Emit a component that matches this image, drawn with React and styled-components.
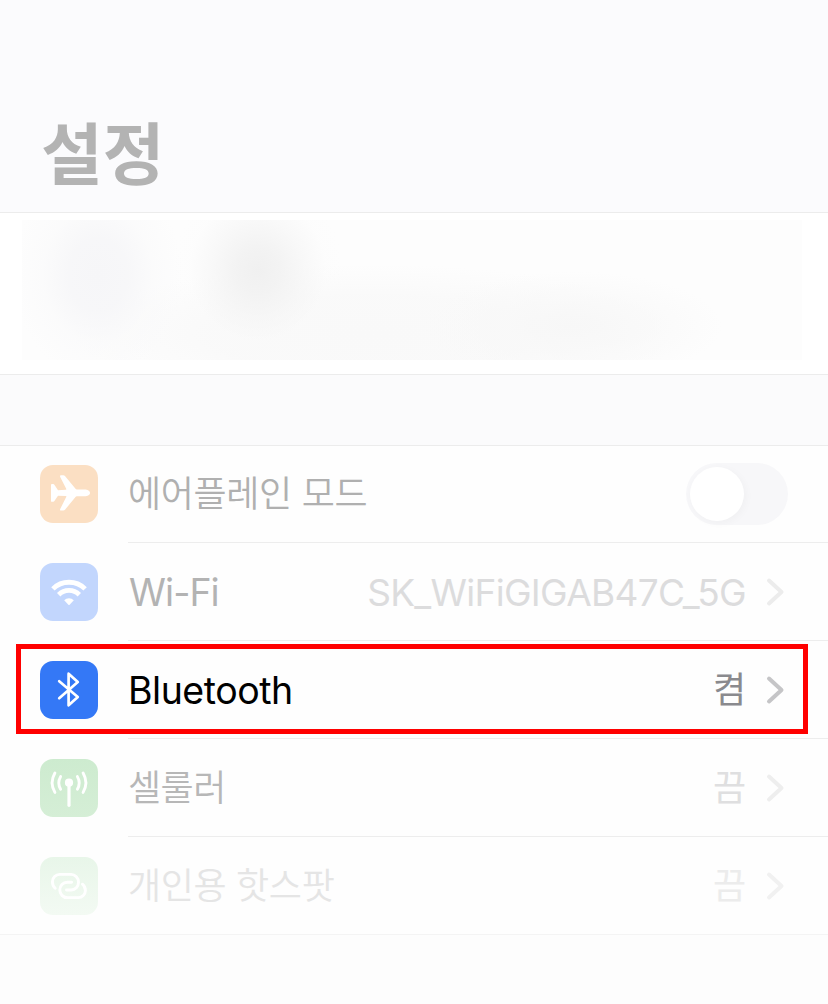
import React from "react";
import styled, { createGlobalStyle } from "styled-components";

const GlobalStyle = createGlobalStyle`
  * { box-sizing: border-box; }
  body { margin: 0; background: #fdfdfd; }
`;

const Screen = styled.main`
  width: 828px;
  height: 1004px;
  overflow: hidden;
  display: flex;
  flex-direction: column;
  background: #fdfdfd;
  font-family: Inter, "Noto Sans CJK KR", sans-serif;
`;

const Header = styled.header`
  height: 213px;
  padding: 111px 0 0 41px;
  background: #fbfbfd;
  border-bottom: 1px solid #ececec;
`;

const Title = styled.h1`
  margin: 0;
  font-size: 67px;
  line-height: 88px;
  font-weight: 700;
  color: #b3b3b3;
`;

const Profile = styled.section`
  height: 162px;
  padding: 7px 26px 14px 22px;
  background: #ffffff;
  border-bottom: 1px solid #ececec;
`;

const ProfileHaze = styled.div`
  height: 140px;
  background:
    radial-gradient(ellipse 85px 90px at 236px 50px, #f0f0f0 0%, rgba(241, 241, 241, 0.85) 25%, rgba(244, 244, 244, 0.5) 55%, rgba(250, 250, 250, 0.15) 80%, rgba(252, 252, 252, 0) 100%),
    radial-gradient(ellipse 85px 105px at 76px 55px, #f6f6f8 0%, rgba(246, 246, 248, 0.85) 35%, rgba(249, 249, 250, 0.5) 65%, rgba(252, 252, 252, 0) 100%),
    radial-gradient(ellipse 150px 55px at 550px 106px, #f7f7f7 0%, rgba(248, 248, 248, 0.7) 45%, rgba(252, 252, 252, 0) 100%),
    radial-gradient(ellipse 300px 70px at 350px 114px, #f9f9f9 0%, rgba(249, 249, 249, 0.85) 55%, rgba(253, 253, 253, 0) 100%),
    #fdfdfd;
`;

const Gap = styled.div`
  height: 71px;
  background: #fbfbfc;
  border-bottom: 1px solid #ececec;
`;

const List = styled.ul`
  margin: 0;
  padding: 0;
  list-style: none;
  background: #fefefe;
`;

const Row = styled.li`
  position: relative;
  display: flex;
  height: ${(p) => (p.$first ? 97 : 98)}px;
  padding-left: 40px;
  border-bottom: ${(p) => (p.$last ? "1px solid #f4f4f4" : "none")};
`;

const Tile = styled.div`
  flex: none;
  width: 58px;
  height: 58px;
  margin: ${(p) => (p.$first ? 19 : 20)}px 30px 0 0;
  border-radius: 13px;
  background: ${(p) => p.$fill};
  svg { display: block; }
`;

const Body = styled.div`
  flex: 1;
  display: flex;
  align-items: flex-start;
  padding: ${(p) => (p.$first ? 19 : 20)}px 40px 0 0;
  border-bottom: ${(p) => (p.$last ? "none" : "1px solid #ededed")};
`;

const Label = styled.span`
  flex: 1;
  padding-left: ${(p) => p.$inset || 0}px;
  white-space: nowrap;
  font-size: ${(p) => p.$size}px;
  font-weight: ${(p) => p.$weight || 400};
  letter-spacing: ${(p) => p.$track}px;
  line-height: 59px;
  color: ${(p) => p.$color};
`;

const Value = styled.span`
  white-space: nowrap;
  font-size: ${(p) => p.$size}px;
  letter-spacing: ${(p) => p.$track || 0}px;
  line-height: 59px;
  color: ${(p) => p.$color};
`;

const Chevron = styled.svg`
  flex: none;
  width: 22px;
  height: 58px;
  margin-left: 20px;
  stroke: ${(p) => p.$color};
`;

const Switch = styled.div`
  width: 102px;
  height: 62px;
  margin-top: -2px;
  padding: 4px;
  border-radius: 31px;
  background: #f7f7f9;
`;

const Knob = styled.div`
  width: 54px;
  height: 54px;
  border-radius: 50%;
  background: #fff;
  box-shadow: 2px 2px 8px rgba(0, 0, 0, 0.03);
`;

const Highlight = styled.div`
  position: absolute;
  left: 16px;
  top: 3px;
  width: 792px;
  height: 90px;
  border: 5px solid #ff0000;
`;

const Glyph = ({ children, stroke, width }) => (
  <svg
    width="58"
    height="58"
    viewBox="0 0 58 58"
    fill={stroke ? "none" : "#fff"}
    stroke={stroke ? "#fff" : "none"}
    strokeWidth={width}
    strokeLinecap="round"
    strokeLinejoin="round"
  >
    {children}
  </svg>
);

const Airplane = () => (
  <Glyph>
    <path d="M50 27.9C50 29.8 47.6 31.2 44.5 31.2H37.4C36.4 31.2 35.9 31.5 35.3 32.3L25.2 44.6C24.7 45.3 24 45.6 23.2 45.6H21.2C20.2 45.6 19.8 44.9 20.2 44L26.2 32C26.5 31.4 26.4 31.1 25.7 31.1L18 30.7L14.4 36.1C14.1 36.6 13.7 36.8 13.1 36.8H11.9C11.3 36.8 11 36.5 11 35.9V20C11 19.4 11.3 19 11.9 19H13.1C13.7 19 14.1 19.3 14.4 19.8L18 25.2L25.7 24.7C26.4 24.7 26.5 24.4 26.2 23.8L20.2 11.9C19.8 11 20.2 10.2 21.2 10.2H23.2C24 10.2 24.7 10.6 25.2 11.2L35.3 23.5C35.9 24.3 36.4 24.6 37.4 24.6H44.5C47.6 24.6 50 26 50 27.9Z" />
  </Glyph>
);

const Wifi = () => (
  <Glyph>
    <g fill="none" stroke="#fff" strokeWidth="4.8" strokeLinecap="butt">
      <path d="M12.9 25.9A22.8 22.8 0 0 1 45.1 25.9" />
      <path d="M18.7 31.7A14.5 14.5 0 0 1 39.3 31.7" />
    </g>
    <path d="M24.2 37.2A6.8 6.8 0 0 1 33.8 37.2L29.6 41.8Q29 42.4 28.4 41.8Z" />
  </Glyph>
);

const Bluetooth = () => (
  <Glyph stroke width="2.7">
    <path d="M19.2 20.2L37.8 36L28.6 44.3V12.7L37.8 21L19.2 37.2" />
  </Glyph>
);

const Cellular = () => (
  <Glyph stroke width="2.9">
    <circle cx="29" cy="23.7" r="4.1" fill="#fff" stroke="none" />
    <path d="M29 24V46.3" strokeWidth="3.2" />
    <path d="M20.6 17.6Q17 23.9 20.6 30.2M14.9 14Q9.3 23.7 14.9 33.4M37.4 17.6Q41 23.9 37.4 30.2M43.1 14Q48.7 23.7 43.1 33.4" />
  </Glyph>
);

const Hotspot = () => (
  <Glyph stroke width="2.9">
    <path d="M15.2 31.3C13.4 29.6 12.4 27.3 12.4 24.8C12.4 20.6 15.7 17.4 19.8 17.4H31C35.3 17.4 38.5 20.9 38.5 25.2C38.5 29.6 35.3 33 31 33H26.5" />
    <path d="M42.4 27.2C44.3 28.7 45.4 31 45.4 33.4C45.4 37.3 42.2 40.6 38.2 40.6H27.2C23 40.6 19.8 37.2 19.8 33C19.8 28.6 23 25.2 27.2 25.2H31.6" />
  </Glyph>
);

const rows = [
  { label: "에어플레인 모드", size: 36, track: -0.35, weight: 350, color: "#b0b0b0", fill: "#fbdfc3", icon: Airplane, toggle: true },
  { label: "Wi-Fi", size: 37.5, track: -0.95, inset: 1, color: "#b3b3b3", fill: "#c2d6fd", icon: Wifi, value: "SK_WiFiGIGAB47C_5G", valueSize: 37, valueTrack: -0.7, valueColor: "#dcdcdd", arrow: "#ececec" },
  { label: "Bluetooth", size: 37.5, track: -0.48, color: "#000", fill: "#3478f6", icon: Bluetooth, value: "켬", valueSize: 36, valueColor: "#8a8a8e", arrow: "#c5c5c7", active: true },
  { label: "셀룰러", size: 36, track: -0.5, weight: 350, color: "#b7b7b7", fill: "linear-gradient(#cdebcf, #d5eed6)", icon: Cellular, value: "끔", valueSize: 36, valueColor: "#dfdfe0", arrow: "#eeeeee" },
  { label: "개인용 핫스팟", size: 36, track: -0.35, weight: 350, color: "#e5e5e5", fill: "linear-gradient(#e8f6e9, #f3faf3)", icon: Hotspot, value: "끔", valueSize: 36, valueColor: "#ececec", arrow: "#f1f1f1" },
];

function SettingRow({ item, first, last }) {
  const Icon = item.icon;
  return (
    <Row $first={first} $last={last}>
      <Tile $fill={item.fill} $first={first}><Icon /></Tile>
      <Body $first={first} $last={last}>
        <Label $size={item.size} $track={item.track} $weight={item.weight} $inset={item.inset} $color={item.color}>
          {item.label}
        </Label>
        {item.toggle && <Switch role="switch" aria-checked="false"><Knob /></Switch>}
        {item.value && (
          <>
            <Value $size={item.valueSize} $track={item.valueTrack} $color={item.valueColor}>{item.value}</Value>
            <Chevron viewBox="0 0 22 58" $color={item.arrow} fill="none" strokeWidth="4" strokeLinecap="round" strokeLinejoin="round">
              <path d="M3 17.5L15.5 29L3 40.5" />
            </Chevron>
          </>
        )}
      </Body>
      {item.active && <Highlight />}
    </Row>
  );
}

export default function App() {
  return (
    <Screen>
      <GlobalStyle />
      <Header><Title>설정</Title></Header>
      <Profile><ProfileHaze /></Profile>
      <Gap />
      <List>
        {rows.map((item, i) => (
          <SettingRow key={item.label} item={item} first={i === 0} last={i === rows.length - 1} />
        ))}
      </List>
    </Screen>
  );
}
